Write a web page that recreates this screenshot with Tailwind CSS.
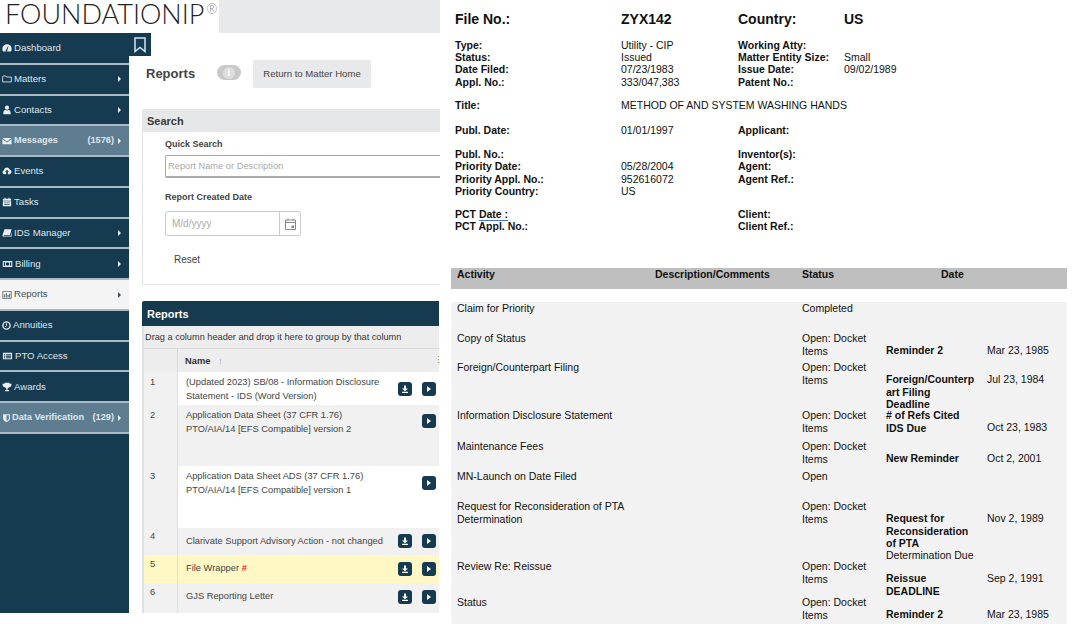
<!DOCTYPE html>
<html lang="en">
<head>
<meta charset="UTF-8">
<title>FoundationIP Reports</title>
<script src="https://cdn.jsdelivr.net/npm/@tailwindcss/browser@4"></script>
</head>
<body class="bg-white font-['Liberation_Sans',Arial,sans-serif]">
<div class="flex w-[1072px] h-[624px] overflow-hidden">

  <!-- App screenshot -->
  <div class="w-[440px] shrink-0 overflow-hidden">
    <div class="flex h-[33px]">
      <div class="flex items-start w-[219px] pl-[5px] bg-white text-[#222] font-['Lato',sans-serif] font-light text-[27px] leading-[28px] whitespace-nowrap">FOUNDATIONIP<span class="ml-[2px] mt-[2px] text-[13px] text-[#777] leading-[14px]">®</span></div>
      <div class="flex-1 bg-[#e8e9eb]"></div>
    </div>
    <div class="flex">
      <!-- Sidebar -->
      <nav class="w-[129px] h-[580px] pt-[1px] bg-[#163a50] text-[9.6px] text-[#dfe6ea] whitespace-nowrap">
        <a class="flex items-center h-[30.77px] pl-[2px] pr-[8px] border-b-2 border-[#a9bac4]">
          <svg class="w-[10px] h-[10px] mr-[2px]" viewBox="0 0 12 12" fill="#e8eef1"><path d="M6 1.5a5.6 5.6 0 0 0-5.6 5.6c0 1.2.3 2.2 1 3h9.2c.7-.8 1-1.8 1-3A5.6 5.6 0 0 0 6 1.5zM5 8.2l2-4 .7.3-1.4 4.2a1 1 0 1 1-1.3-.5z"/></svg>Dashboard</a>
        <a class="flex items-center h-[30.77px] pl-[2px] pr-[8px] border-b-2 border-[#a9bac4]">
          <svg class="w-[10px] h-[10px] mr-[2px]" viewBox="0 0 12 12" fill="none" stroke="#e8eef1"><path d="M.8 3.2v6.3h10.4V3.700H5.600L4.600 2.400H1.400z"/></svg>Matters
          <span class="ml-auto w-0 h-0 border-y-[3px] border-y-transparent border-l-[3px] border-l-[#e8eef1]"></span></a>
        <a class="flex items-center h-[30.77px] pl-[2px] pr-[8px] border-b-2 border-[#a9bac4]">
          <svg class="w-[10px] h-[10px] mr-[2px]" viewBox="0 0 12 12" fill="#e8eef1"><circle cx="6" cy="3.200" r="2.500"/><path d="M1.500 11c0-3 1-4.800 2.600-5.200.6.500 1.200.7 1.900.7s1.300-.2 1.900-.7c1.600.4 2.600 2.200 2.600 5.200z"/></svg>Contacts
          <span class="ml-auto w-0 h-0 border-y-[3px] border-y-transparent border-l-[3px] border-l-[#e8eef1]"></span></a>
        <a class="flex items-center h-[30.77px] pl-[2px] pr-[8px] border-b-2 border-[#a9bac4] bg-[#5f7d91] font-bold text-[9.2px]">
          <svg class="w-[10px] h-[10px] mr-[2px]" viewBox="0 0 12 12" fill="#e8eef1"><path d="M.5 2.500h11L6 6.500zM.5 3.800v6h11v-6L6 7.800z"/></svg>Messages
          <span class="ml-auto">(1576)</span>
          <span class="ml-[4px] w-0 h-0 border-y-[3px] border-y-transparent border-l-[3px] border-l-[#e8eef1]"></span></a>
        <a class="flex items-center h-[30.77px] pl-[2px] pr-[8px] border-b-2 border-[#a9bac4]">
          <svg class="w-[10px] h-[10px] mr-[2px]" viewBox="0 0 12 12" fill="#e8eef1"><path d="M3 10a2.500 2.500 0 0 1-.6-4.900A3.500 3.500 0 0 1 9.200 4.300 2.900 2.900 0 0 1 9 10h-2V7h1.400L6 4.500 3.600 7H5v3z"/></svg>Events</a>
        <a class="flex items-center h-[30.77px] pl-[2px] pr-[8px] border-b-2 border-[#a9bac4]">
          <svg class="w-[10px] h-[10px] mr-[2px]" viewBox="0 0 12 12" fill="#e8eef1"><path fill-rule="evenodd" d="M3 .8h1.200v1.400h3.600V.8H9v1.400h2v2.300H1V2.200h2zM1 5.200h10v6H1zM3 6.500v1h1.500v-1zm2.300 0v1h1.500v-1zm2.300 0v1H9v-1zM3 8.500v1h1.500v-1zm2.300 0v1h1.500v-1zm2.300 0v1H9v-1z"/></svg>Tasks</a>
        <a class="flex items-center h-[30.77px] pl-[2px] pr-[8px] border-b-2 border-[#a9bac4]">
          <svg class="w-[10px] h-[10px] mr-[2px]" viewBox="0 0 12 12" fill="#e8eef1"><path d="M3 1.500h8.500L9.500 8.800H2.600c-.8 0-.8 1 0 1h7.600l1.300-5v5.700H2.300C1 10.500.3 9.500.6 8.400z"/></svg>IDS Manager
          <span class="ml-auto w-0 h-0 border-y-[3px] border-y-transparent border-l-[3px] border-l-[#e8eef1]"></span></a>
        <a class="flex items-center h-[30.77px] pl-[2px] pr-[8px] border-b-2 border-[#a9bac4]">
          <svg class="w-[11px] h-[10px] mr-[2px]" viewBox="0 0 12 12" fill="#e8eef1"><path fill-rule="evenodd" d="M.3 2.500h11.400v7H.3zM6 3.800a2.200 2.200 0 1 0 0 4.400 2.200 2.200 0 0 0 0-4.400zM1.600 3.800v4.400h1.500V3.800zm7.300 0v4.400h1.500V3.800z"/></svg>Billing
          <span class="ml-auto w-0 h-0 border-y-[3px] border-y-transparent border-l-[3px] border-l-[#e8eef1]"></span></a>
        <a class="flex items-center h-[30.77px] pl-[2px] pr-[8px] border-b-2 border-[#a9bac4] bg-[#f4f4f4] text-[#40505a]">
          <svg class="w-[10px] h-[10px] mr-[2px]" viewBox="0 0 12 12" fill="#5a6368"><path fill-rule="evenodd" d="M.5 1.500h11v9H.5zM1.500 2.500v7h9v-7z"/><path d="M2.500 5.500h1.200v3.500H2.500zM4.600 3.500h1.200v5.500H4.600zM6.700 6h1.200v3H6.700zM8.600 4.500h1.200V9H8.600z"/></svg>Reports
          <span class="ml-auto w-0 h-0 border-y-[3px] border-y-transparent border-l-[3px] border-l-[#40505a]"></span></a>
        <a class="flex items-center h-[30.77px] pl-[2px] pr-[8px] border-b-2 border-[#a9bac4]">
          <svg class="w-[9px] h-[9px] mr-[2px]" viewBox="0 0 12 12" fill="none" stroke="#e8eef1" stroke-width="1.800"><circle cx="6" cy="6" r="4.800"/><path d="M6 3v3.300L4 7.800" stroke-width="1.300"/></svg>Annuities</a>
        <a class="flex items-center h-[30.77px] pl-[2px] pr-[8px] border-b-2 border-[#a9bac4]">
          <svg class="w-[11px] h-[10px] mr-[2px]" viewBox="0 0 12 12" fill="#e8eef1"><path fill-rule="evenodd" d="M.5 2h11v8H.5zM1.800 4v1h1.500V4zm2.500 0v1h6V4zM1.800 5.800v1h1.500v-1zm2.500 0v1h6v-1zM1.800 7.600v1h1.500v-1zm2.500 0v1h6v-1z"/></svg>PTO Access</a>
        <a class="flex items-center h-[30.77px] pl-[2px] pr-[8px] border-b-2 border-[#a9bac4]">
          <svg class="w-[10px] h-[10px] mr-[2px]" viewBox="0 0 12 12" fill="#e8eef1"><path d="M3 1h6v1h2.500c0 2.500-1 4-3 4.300C8 7 7.300 7.500 6.700 7.700V9.500H8.500V11h-5V9.500h1.800V7.700C4.700 7.500 4 7 3.500 6.300 1.500 6 .5 4.500.5 2H3z"/></svg>Awards</a>
        <a class="flex items-center h-[30.77px] pl-[2px] pr-[8px] border-b-2 border-[#a9bac4] bg-[#5f7d91] font-bold text-[9.2px]">
          <svg class="w-[9px] h-[10px] mr-[1px]" viewBox="0 0 12 12" fill="#e8eef1"><path fill-rule="evenodd" d="M1.500 1h9v5.500c0 2.300-2.200 3.900-4.500 4.800-2.300-.9-4.500-2.500-4.500-4.800zM6 2.400v7.400c1.500-.7 3.100-1.900 3.100-3.300V2.400z"/></svg>Data Verification
          <span class="ml-auto">(129)</span>
          <span class="ml-[4px] w-0 h-0 border-y-[3px] border-y-transparent border-l-[3px] border-l-[#e8eef1]"></span></a>
      </nav>

      <!-- Main content -->
      <main class="w-[311px] overflow-hidden">
        <div class="w-[22px] h-[23px] bg-[#163a50] flex items-center justify-center">
          <svg class="w-[12px] h-[16px]" viewBox="0 0 12 16" fill="none" stroke="#cfe6f2" stroke-width="1.500"><path d="M1 1h10v13.500L6 10.500 1 14.500z"/></svg>
        </div>
        <div class="flex items-start h-[49px] pl-[17px] mt-[4px] text-[#3b3b3b]">
          <h1 class="mt-[5px] w-[71px] text-[13px] leading-[18px] font-bold text-[#444]">Reports</h1>
          <div class="mt-[5px] flex items-center justify-center w-[24px] h-[15px] rounded-full bg-[#c9c9c9]">
            <span class="w-[12px] h-[12px] rounded-full bg-[#dedede] text-white text-[10px] leading-[12px] font-bold text-center font-['Liberation_Serif',serif]">i</span>
          </div>
          <button class="ml-[12px] w-[118px] h-[28px] rounded-[2px] bg-[#e8e9eb] text-[9.6px] text-[#444]">Return to Matter Home</button>
        </div>

        <section class="ml-[13px] w-[320px] h-[176px] border-l border-[#e5e5e5] border-b">
          <h2 class="h-[23px] pl-[4px] bg-[#e6e7e9] text-[11px] leading-[24px] font-bold text-[#3a3a3a]">Search</h2>
          <div class="pl-[22px] text-[#444]">
            <label class="block mt-[6px] text-[9px] leading-[12px] font-bold">Quick Search</label>
            <div class="mt-[5px] h-[23px] border border-[#aaa] border-b-2 rounded-[2px] pl-[2px] text-[9.3px] leading-[20px] text-[#aaa]">Report Name or Description</div>
            <label class="block mt-[13px] text-[9px] leading-[12px] font-bold">Report Created Date</label>
            <div class="mt-[8px] flex w-[136px] h-[25px] border border-[#ccc] rounded-[3px]">
              <span class="w-[113px] pl-[6px] text-[10px] leading-[23px] text-[#aaa]">M/d/yyyy</span>
              <span class="flex-1 flex items-center justify-center border-l border-[#ccc]">
                <svg class="w-[11px] h-[12px]" viewBox="0 0 11 12" fill="none" stroke="#888"><path d="M.5 2h10v9.500H.5zM.5 4.500h10M3 .5v2M8 .5v2"/><path d="M6.500 7.500h2.500v2.500H6.500z" fill="#888" stroke="none"/></svg>
              </span>
            </div>
            <div class="mt-[18px] pl-[9px] text-[10px] leading-[12px] text-[#444]">Reset</div>
          </div>
        </section>

        <section class="mt-[16px] ml-[13px] w-[297px] text-[9.3px] text-[#444] [&>div]:border-l-2 [&>div]:border-l-[#e0e0e0]">
          <h2 class="h-[25px] pl-[5px] bg-[#163a50] rounded-tl-[2px] text-[11px] leading-[26px] font-bold text-white">Reports</h2>
          <div class="h-[23px] pl-[1px] bg-[#ededed] border-b border-[#d8d8d8] text-[9.2px] leading-[22px] text-[#333]">Drag a column header and drop it here to group by that column</div>
          <div class="flex h-[23px] bg-[#ededed]">
            <div class="w-[34px] border-r border-[#d8d8d8]"></div>
            <div class="w-[256px] pl-[7px] font-bold leading-[24px] text-[#333]">Name <span class="ml-[5px] font-normal text-[#999]">↑</span></div>
            <div class="w-[5px] text-[#b08a60] leading-[22px]">⋮</div>
          </div>
          <div class="flex h-[33px] leading-[14px] bg-white">
            <div class="w-[34px] pl-[6px] pt-[3px] bg-[#f1f1f1] border-r border-[#e0e0e0]">1</div>
            <div class="w-[220px] pl-[8px] pt-[3px]">(Updated 2023) SB/08 - Information Disclosure<br>Statement - IDS (Word Version)</div>
            <div class="flex gap-[10px] pt-[10px]">
              <span class="flex items-center justify-center w-[14px] h-[14px] rounded-[3px] bg-[#163a50]"><svg class="w-[8px] h-[8px]" viewBox="0 0 8 8" fill="white"><path d="M3 .5h2v3h2L4 6.200 1 3.500h2zM1 6.800h6V8H1z"/></svg></span>
              <span class="flex items-center justify-center w-[14px] h-[14px] rounded-[3px] bg-[#163a50]"><span class="w-0 h-0 border-y-[3.500px] border-y-transparent border-l-[4px] border-l-white"></span></span>
            </div>
          </div>
          <div class="flex h-[61px] leading-[14px] bg-[#f1f1f1]">
            <div class="w-[34px] pl-[6px] pt-[3px] border-r border-[#e0e0e0]">2</div>
            <div class="w-[244px] pl-[8px] pt-[3px]">Application Data Sheet (37 CFR 1.76)<br>PTO/AIA/14 [EFS Compatible] version 2</div>
            <div class="pt-[9px]">
              <span class="flex items-center justify-center w-[14px] h-[14px] rounded-[3px] bg-[#163a50]"><span class="w-0 h-0 border-y-[3.500px] border-y-transparent border-l-[4px] border-l-white"></span></span>
            </div>
          </div>
          <div class="flex h-[62px] leading-[14px] bg-white">
            <div class="w-[34px] pl-[6px] pt-[3px] bg-[#f1f1f1] border-r border-[#e0e0e0]">3</div>
            <div class="w-[244px] pl-[8px] pt-[3px]">Application Data Sheet ADS (37 CFR 1.76)<br>PTO/AIA/14 [EFS Compatible] version 1</div>
            <div class="pt-[10px]">
              <span class="flex items-center justify-center w-[14px] h-[14px] rounded-[3px] bg-[#163a50]"><span class="w-0 h-0 border-y-[3.500px] border-y-transparent border-l-[4px] border-l-white"></span></span>
            </div>
          </div>
          <div class="flex h-[27px] leading-[14px] bg-[#f1f1f1]">
            <div class="w-[34px] pl-[6px] pt-[1px] border-r border-[#e0e0e0]">4</div>
            <div class="w-[220px] pl-[8px] pt-[6px]">Clarivate Support Advisory Action - not changed</div>
            <div class="flex gap-[10px] pt-[6px]">
              <span class="flex items-center justify-center w-[14px] h-[14px] rounded-[3px] bg-[#163a50]"><svg class="w-[8px] h-[8px]" viewBox="0 0 8 8" fill="white"><path d="M3 .5h2v3h2L4 6.200 1 3.500h2zM1 6.800h6V8H1z"/></svg></span>
              <span class="flex items-center justify-center w-[14px] h-[14px] rounded-[3px] bg-[#163a50]"><span class="w-0 h-0 border-y-[3.500px] border-y-transparent border-l-[4px] border-l-white"></span></span>
            </div>
          </div>
          <div class="flex h-[28px] leading-[14px] bg-[#fff8c5]">
            <div class="w-[34px] pl-[6px] pt-[2px] border-r border-[#e8e2b8]">5</div>
            <div class="w-[220px] pl-[8px] pt-[6px]">File Wrapper <span class="font-bold text-[#ee2222]">#</span></div>
            <div class="flex gap-[10px] pt-[7px]">
              <span class="flex items-center justify-center w-[14px] h-[14px] rounded-[3px] bg-[#163a50]"><svg class="w-[8px] h-[8px]" viewBox="0 0 8 8" fill="white"><path d="M3 .5h2v3h2L4 6.200 1 3.500h2zM1 6.800h6V8H1z"/></svg></span>
              <span class="flex items-center justify-center w-[14px] h-[14px] rounded-[3px] bg-[#163a50]"><span class="w-0 h-0 border-y-[3.500px] border-y-transparent border-l-[4px] border-l-white"></span></span>
            </div>
          </div>
          <div class="flex h-[30px] leading-[14px] bg-[#f1f1f1]">
            <div class="w-[34px] pl-[6px] pt-[2px] border-r border-[#e0e0e0]">6</div>
            <div class="w-[220px] pl-[8px] pt-[6px]">GJS Reporting Letter</div>
            <div class="flex gap-[10px] pt-[7px]">
              <span class="flex items-center justify-center w-[14px] h-[14px] rounded-[3px] bg-[#163a50]"><svg class="w-[8px] h-[8px]" viewBox="0 0 8 8" fill="white"><path d="M3 .5h2v3h2L4 6.200 1 3.500h2zM1 6.800h6V8H1z"/></svg></span>
              <span class="flex items-center justify-center w-[14px] h-[14px] rounded-[3px] bg-[#163a50]"><span class="w-0 h-0 border-y-[3.500px] border-y-transparent border-l-[4px] border-l-white"></span></span>
            </div>
          </div>
        </section>
      </main>
    </div>
  </div>

  <!-- Matter report -->
  <div class="flex-1 text-[10.5px] leading-[12.2px] text-[#111]">
    <div class="pl-[15px] pt-[12px]">
      <div class="grid grid-cols-[166px_117px_106px_auto] text-[14px] leading-[15px] font-bold">
        <div>File No.:</div><div>ZYX142</div><div>Country:</div><div>US</div>
      </div>
      <div class="mt-[12px] grid grid-cols-[166px_117px_106px_auto]">
        <b>Type:</b><span>Utility - CIP</span><b>Working Atty:</b><span></span>
        <b>Status:</b><span>Issued</span><b>Matter Entity Size:</b><span>Small</span>
        <b>Date Filed:</b><span>07/23/1983</span><b>Issue Date:</b><span>09/02/1989</span>
        <b>Appl. No.:</b><span>333/047,383</span><b>Patent No.:</b><span></span>
      </div>
      <div class="mt-[11px] grid grid-cols-[166px_auto]"><b>Title:</b><span>METHOD OF AND SYSTEM WASHING HANDS</span></div>
      <div class="mt-[13px] grid grid-cols-[166px_117px_106px_auto]">
        <b>Publ. Date:</b><span>01/01/1997</span><b>Applicant:</b><span></span>
      </div>
      <div class="mt-[12px] grid grid-cols-[166px_117px_106px_auto]">
        <b>Publ. No.:</b><span></span><b>Inventor(s):</b><span></span>
        <b>Priority Date:</b><span>05/28/2004</span><b>Agent:</b><span></span>
        <b>Priority Appl. No.:</b><span>952616072</span><b>Agent Ref.:</b><span></span>
        <b>Priority Country:</b><span>US</span><span></span><span></span>
      </div>
      <div class="mt-[11px] grid grid-cols-[166px_117px_106px_auto]">
        <b>PCT <span class="border-b border-[#4a78c8]">Date :</span></b><span></span><b>Client:</b><span></span>
        <b>PCT Appl. No.:</b><span></span><b>Client Ref.:</b><span></span>
      </div>
    </div>

    <div class="mt-[36px] ml-[11px] w-[616px]">
      <div class="flex h-[21px] pl-[6px] bg-[#bfbfbf] font-bold">
        <span class="w-[198px]">Activity</span><span class="w-[147px]">Description/Comments</span><span class="w-[139px]">Status</span><span>Date</span>
      </div>
      <div class="mt-[13px] h-[322px] pl-[6px] bg-[#f2f2f2]">
        <div class="grid grid-cols-[345px_84px_101px_auto] h-[30px]"><span>Claim for Priority</span><span>Completed</span></div>
        <div class="grid grid-cols-[345px_84px_101px_auto] h-[29px]"><span>Copy of Status</span><span>Open: Docket Items</span><b class="pt-[12px]">Reminder 2</b><span class="pt-[12px]">Mar 23, 1985</span></div>
        <div class="grid grid-cols-[345px_84px_101px_auto] h-[48px]"><span>Foreign/Counterpart Filing</span><span>Open: Docket Items</span><b class="pt-[12px]">Foreign/Counterp<br>art Filing<br>Deadline</b><span class="pt-[12px]">Jul 23, 1984</span></div>
        <div class="grid grid-cols-[345px_84px_101px_auto] h-[31px]"><span>Information Disclosure Statement</span><span>Open: Docket Items</span><b># of Refs Cited<br>IDS Due</b><span class="pt-[12px]">Oct 23, 1983</span></div>
        <div class="grid grid-cols-[345px_84px_101px_auto] h-[30px]"><span>Maintenance Fees</span><span>Open: Docket Items</span><b class="pt-[12px]">New Reminder</b><span class="pt-[12px]">Oct 2, 2001</span></div>
        <div class="grid grid-cols-[345px_84px_101px_auto] h-[30px]"><span>MN-Launch on Date Filed</span><span>Open</span></div>
        <div class="grid grid-cols-[345px_84px_101px_auto] h-[60px]"><span>Request for Reconsideration of PTA<br>Determination</span><span>Open: Docket Items</span><div class="pt-[12px]"><b>Request for<br>Reconsideration<br>of PTA</b><br>Determination Due</div><span class="pt-[12px]">Nov 2, 1989</span></div>
        <div class="grid grid-cols-[345px_84px_101px_auto] h-[36px]"><span>Review Re: Reissue</span><span>Open: Docket Items</span><b class="pt-[12px]">Reissue<br>DEADLINE</b><span class="pt-[12px]">Sep 2, 1991</span></div>
        <div class="grid grid-cols-[345px_84px_101px_auto]"><span>Status</span><span>Open: Docket Items</span><b class="pt-[12px]">Reminder 2</b><span class="pt-[12px]">Mar 23, 1985</span></div>
      </div>
    </div>
  </div>
</div>
</body>
</html>
